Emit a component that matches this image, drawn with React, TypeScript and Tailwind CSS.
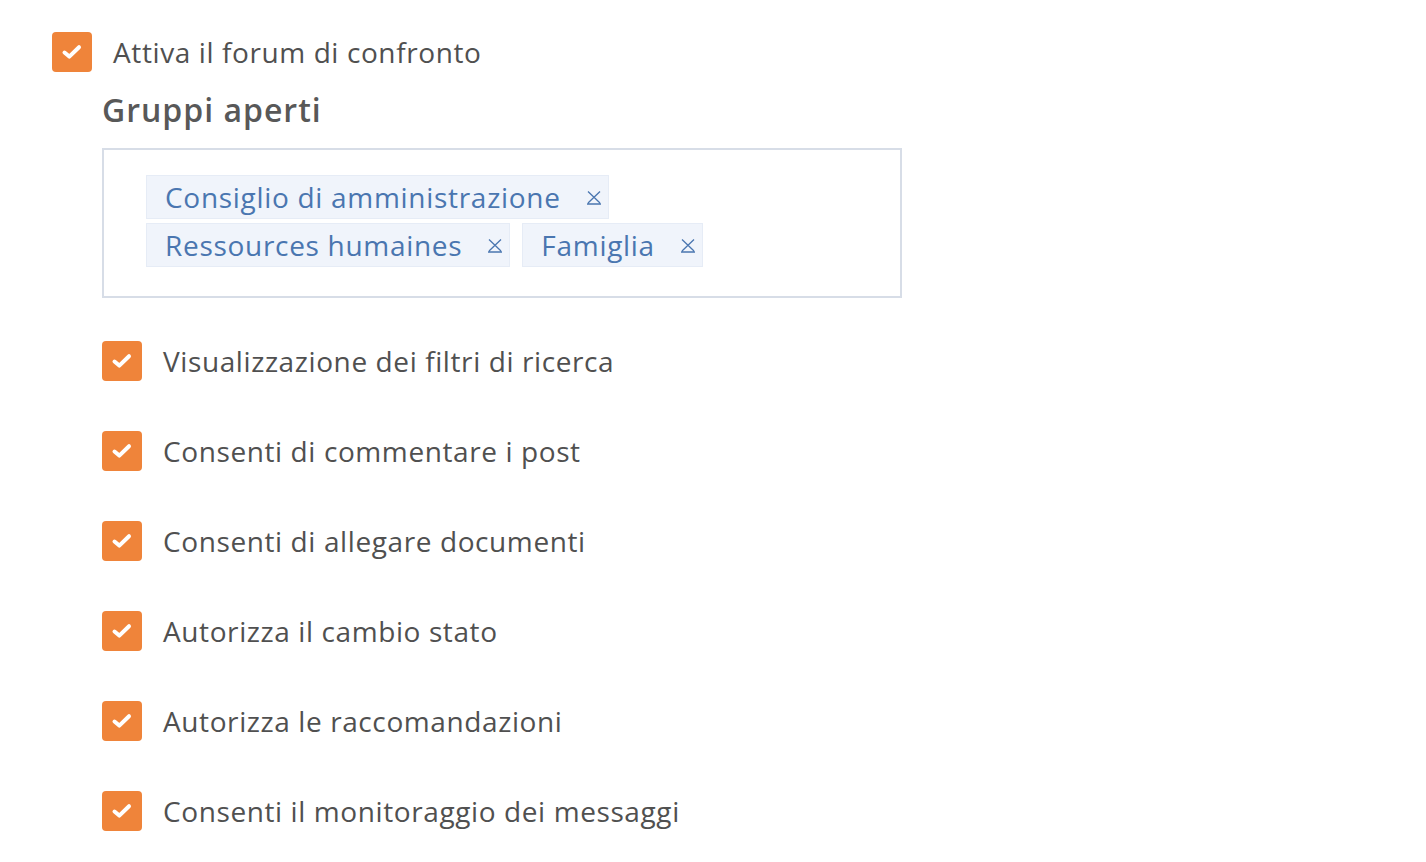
const font = { fontFamily: '"Open Sans", "Noto Sans", sans-serif' };

const options = [
  "Visualizzazione dei filtri di ricerca",
  "Consenti di commentare i post",
  "Consenti di allegare documenti",
  "Autorizza il cambio stato",
  "Autorizza le raccomandazioni",
  "Consenti il monitoraggio dei messaggi",
];

const groups = [["Consiglio di amministrazione"], ["Ressources humaines", "Famiglia"]];

function CheckBox() {
  return (
    <span className="flex h-10 w-10 shrink-0 items-center justify-center rounded-[4px] bg-[#ef843a]">
      <svg width="22" height="18" viewBox="0 0 22 18" fill="none">
        <path d="M3.5 9.5 L8.3 13.6 L18 4.2" stroke="white" strokeWidth="4" strokeLinecap="round" strokeLinejoin="round" />
      </svg>
    </span>
  );
}

function RemoveIcon() {
  return (
    <svg width="16" height="15" viewBox="0 0 16 15" fill="none" className="ml-[25px]">
      <path d="M2 1.5 L14 13 M14 1.5 L2 13 M1 14 H15" stroke="#4a76b0" strokeWidth="1.3" />
    </svg>
  );
}

function Tag({ label }: { label: string }) {
  return (
    <span className="flex h-11 items-center border border-[#e6ecf6] bg-[#f0f4fb] pl-[18px] pr-[6px] text-[28px] tracking-[0.7px] text-[#4a76b0]">
      {label}
      <RemoveIcon />
    </span>
  );
}

export default function App() {
  return (
    <div className="min-h-screen bg-white pl-[52px] pt-8 text-[#505050]" style={font}>
      <label className="flex items-center gap-[21px]">
        <CheckBox />
        <span className="text-[28px] leading-none tracking-[0.6px]">Attiva il forum di confronto</span>
      </label>

      <div className="pl-[50px]">
        <h2 className="mt-[18px] text-[32px] font-semibold leading-10 tracking-[1px] text-[#585858]">Gruppi aperti</h2>

        <div className="mt-[18px] flex h-[150px] w-[800px] flex-col gap-1 border-2 border-[#d7dde7] pl-[42px] pt-[25px]">
          {groups.map((row, i) => (
            <div key={i} className="flex gap-3">
              {row.map((g) => (
                <Tag key={g} label={g} />
              ))}
            </div>
          ))}
        </div>

        <ul className="mt-[43px] flex flex-col gap-[50px]">
          {options.map((o) => (
            <li key={o} className="flex items-center gap-[21px]">
              <CheckBox />
              <span className="text-[28px] leading-none tracking-[0.6px]">{o}</span>
            </li>
          ))}
        </ul>
      </div>
    </div>
  );
}
